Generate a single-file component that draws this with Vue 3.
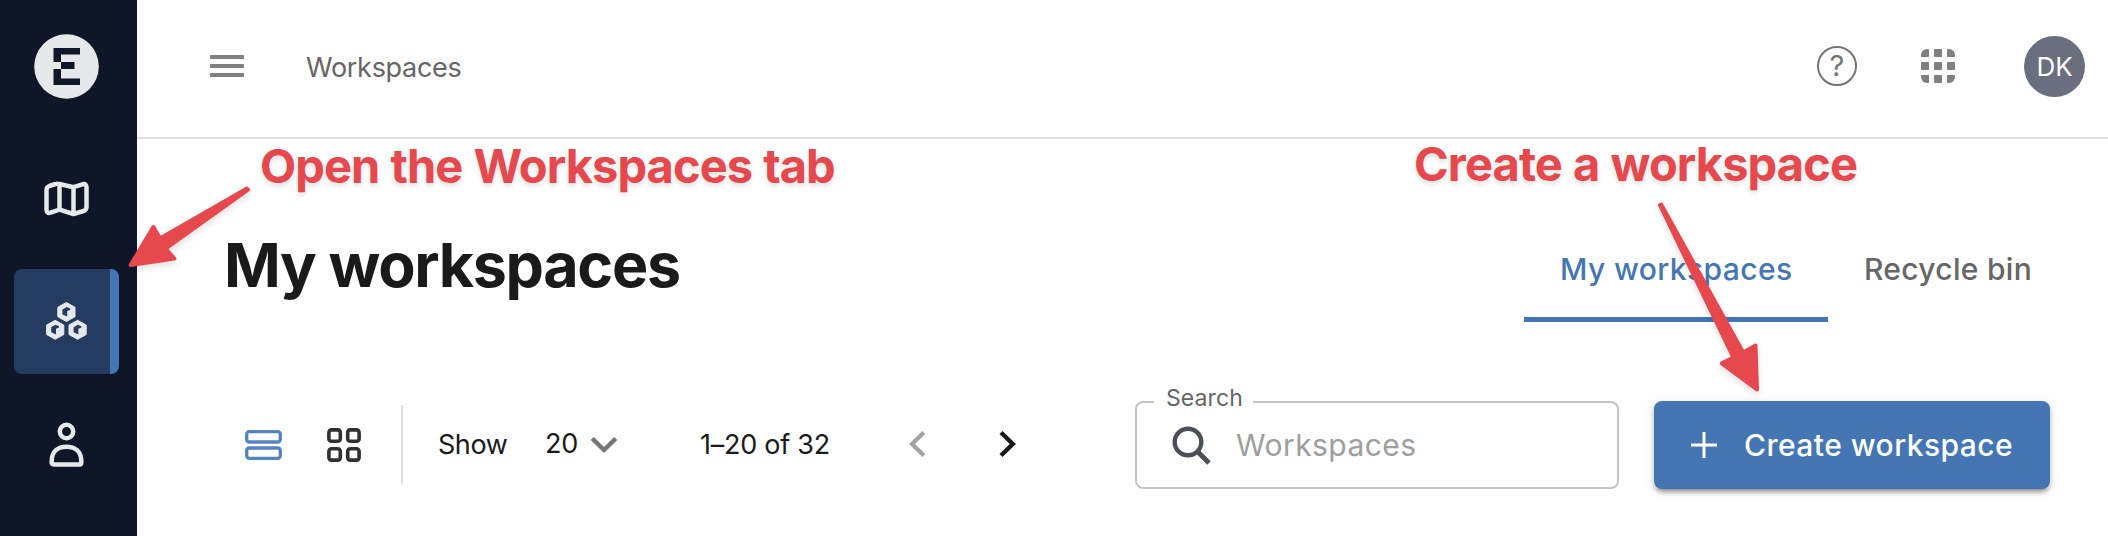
<script setup>
const dots = [0, 13, 26]
</script>

<template>
  <div class="app">
    <aside class="sidebar">
      <svg class="logo" width="65" height="65" viewBox="0 0 65 65">
        <circle cx="32.5" cy="32.5" r="32.3" fill="#e6e8ea" />
        <path d="M19.500 14H46v6.500H27V28h13.500v7H27v9.500h19V51H19.500V35H27v-7H19.500z" fill="#0f1628" />
      </svg>
      <a class="item map">
        <svg width="47" height="38" viewBox="0.5 0 47 38" fill="none" stroke="#e6e8ea" stroke-width="4.500" stroke-linejoin="round">
          <path d="M17 4 Q15 3.300 13 4 L6.800 6 Q4 7 4 10 V29.500 Q4 34 8 32.700 L17 29.700 L31 34 L41 31 Q44 30 44 27 V7.500 Q44 3.300 40 4.300 L31 7.200 Z M17 4 V30 M31 7.500 V34" />
        </svg>
      </a>
      <a class="item active">
        <svg width="42" height="38" viewBox="0 0 42 38">
          <defs>
            <g id="cube">
              <path d="M9.200 0.500 L17.800 5.300 V14.700 L9.200 19.500 L0.600 14.700 V5.300 Z" fill="#e6e9ec" stroke="#e6e9ec" stroke-width="1" stroke-linejoin="round" />
              <path d="M5.200 7.400 L9.500 5 L13 6.500 V7.800 L10 9 V14.600 L5.200 12.500 Z" fill="#253c60" />
            </g>
          </defs>
          <use href="#cube" x="11.200" y="0" />
          <use href="#cube" x="0" y="17.800" />
          <use href="#cube" x="22.400" y="17.800" />
        </svg>
      </a>
      <a class="item person">
        <svg width="37" height="46" viewBox="-0.500 0 37 46" fill="none" stroke="#e6e8ea" stroke-width="4.500">
          <circle cx="18" cy="9.500" r="6.700" />
          <path d="M3.200 39 C3.200 30 9 24.700 18 24.700 S32.800 30 32.800 39 V40.500 Q32.800 42.500 30.800 42.500 H5.200 Q3.200 42.500 3.200 40.500 Z" />
        </svg>
      </a>
    </aside>

    <div class="main">
      <header class="topbar">
        <svg class="burger" width="34" height="22" viewBox="0 0 34 22" fill="#808080">
          <rect width="34" height="4" rx="0.800" />
          <rect y="9" width="34" height="4" rx="0.800" />
          <rect y="18" width="34" height="4" rx="0.800" />
        </svg>
        <span class="crumb">Workspaces</span>
        <span class="help">?</span>
        <svg class="apps" width="34" height="34" viewBox="0 0 34 34" fill="#808080">
          <clipPath id="round"><rect width="34" height="34" rx="6" /></clipPath>
          <g clip-path="url(#round)">
            <template v-for="y in dots" :key="y">
              <rect v-for="x in dots" :key="x" :x="x" :y="y" width="8" height="8" rx="0.700" />
            </template>
          </g>
        </svg>
        <span class="avatar">DK</span>
      </header>

      <section class="heading">
        <h1>My workspaces</h1>
        <nav class="tabs">
          <a class="tab current"><span>My workspaces</span></a>
          <a class="tab"><span>Recycle bin</span></a>
        </nav>
      </section>

      <section class="toolbar">
        <svg class="rows" width="37" height="30" viewBox="0 0 37 30" fill="none" stroke="#5584c0" stroke-width="3.300">
          <rect x="1.700" y="1.700" width="33.600" height="10.300" rx="2.500" />
          <rect x="1.700" y="18" width="33.600" height="10.300" rx="2.500" />
        </svg>
        <svg class="cells" width="34" height="34" viewBox="0 0 34 34" fill="none" stroke="#303030" stroke-width="3.600">
          <rect x="1.900" y="1.900" width="11.400" height="11.400" rx="2.500" />
          <rect x="20.700" y="1.900" width="11.400" height="11.400" rx="2.500" />
          <rect x="1.900" y="20.700" width="11.400" height="11.400" rx="2.500" />
          <rect x="20.700" y="20.700" width="11.400" height="11.400" rx="2.500" />
        </svg>
        <i class="divider"></i>
        <span class="show">Show</span>
        <span class="count">20</span>
        <svg class="down" width="28" height="18" viewBox="0 0 28 18" fill="none" stroke="#757575" stroke-width="4.400">
          <path d="M2.300 2.500 L14 14 L25.700 2.500" />
        </svg>
        <span class="range">1–20 of 32</span>
        <svg class="prev" width="17" height="28" viewBox="0 0 17 28" fill="none" stroke="#a3a3a3" stroke-width="4.200">
          <path d="M14.800 2.500 L3 14 L14.800 25.500" />
        </svg>
        <svg class="next" width="17" height="28" viewBox="0 0 17 28" fill="none" stroke="#1a1a1a" stroke-width="4.400">
          <path d="M2 2.500 L13.800 14 L2 25.500" />
        </svg>
        <fieldset class="search">
          <legend><span>Search</span></legend>
          <div class="field">
            <svg width="40" height="40" viewBox="0 0 40 40" fill="none" stroke="#4d5059" stroke-width="4.400">
              <circle cx="16" cy="16" r="13.300" />
              <path d="M25.500 25.500 L37 37" stroke-width="5" />
            </svg>
            <span class="placeholder">Workspaces</span>
          </div>
        </fieldset>
        <button class="create">
          <svg width="26" height="26" viewBox="0 0 26 26" stroke="#fff" stroke-width="3"><path d="M13 0 V26 M0 13 H26" /></svg>
          <span>Create workspace</span>
        </button>
      </section>
    </div>

    <div class="notes">
      <span class="note open">Open the Workspaces tab</span>
      <span class="note make">Create a workspace</span>
      <svg class="arrows" width="2108" height="536" viewBox="0 0 2108 536" fill="#e5484d" stroke="#e5484d" stroke-width="4" stroke-linejoin="round">
        <path d="M247 188.600 L248 189.600 L165.500 248.500 L174.300 258.600 L130.600 265 L153.400 227 L160 238.600 Z" />
        <path d="M1659.900 205 L1661.300 204.600 L1743.300 352.600 L1755.500 345.500 L1757 389.500 L1721.800 363.400 L1733.500 357.600 Z" />
      </svg>
    </div>
  </div>
</template>

<style>
body { margin: 0; background: #fff; }
</style>

<style scoped>
.app { position: relative; display: flex; width: 2108px; height: 536px; overflow: hidden; background: #fff; font-family: Inter, "Liberation Sans", sans-serif; color: #1a1a1a; }
.app svg { display: block; flex: none; }
.app span, h1 { white-space: nowrap; flex: none; }
.sidebar { flex: none; box-sizing: border-box; width: 137px; height: 536px; padding: 34px 18px 0 14px; background: #0f1628; display: flex; flex-direction: column; }
.logo { margin-left: 20px; }
.item { flex: none; box-sizing: border-box; width: 105px; height: 105px; display: flex; align-items: center; justify-content: center; }
.map { margin-top: 47px; }
.active { margin-top: 18px; padding-bottom: 2px; border-radius: 8px; background: linear-gradient(to right, #253c60 96px, #4476b4 96px); }
.person { margin-top: 18px; }
.main { flex: 1; min-width: 0; }
.topbar { box-sizing: border-box; height: 139px; border-bottom: 2px solid #e0e0e0; padding: 0 23px 5px 73px; display: flex; align-items: center; }
.crumb { margin-left: 62px; padding-top: 3px; font-size: 27px; letter-spacing: -0.3px; color: #666; }
.help { box-sizing: border-box; width: 40px; height: 40px; margin-left: auto; border: 2px solid #757575; border-radius: 50%; font-size: 29px; line-height: 36px; text-align: center; color: #757575; }
.apps { margin-left: 64px; }
.avatar { width: 61px; height: 61px; margin-left: 69px; border-radius: 50%; background: #6a6f7f; color: #fff; font-size: 26px; line-height: 61px; text-align: center; }
.heading { display: flex; justify-content: space-between; height: 262px; }
h1 { margin: 86px 0 0 87px; font-size: 61px; line-height: 80px; font-weight: 700; letter-spacing: -1.35px; }
.tabs { display: flex; margin-right: 41px; }
.tab { box-sizing: border-box; height: 183px; padding: 110px 36px 0; font-size: 30px; line-height: 40px; font-weight: 500; letter-spacing: 0.4px; color: #666; }
.current { width: 304px; color: #4476b4; border-bottom: 5px solid #4476b4; }
.tab:last-child { width: 239px; letter-spacing: 0.3px; }
.toolbar { display: flex; height: 88px; align-items: center; padding-left: 109px; }
.rows { margin-left: -1px; }
.cells { margin-left: 45px; }
.divider { width: 2px; height: 79px; margin: 0 0 1px 40px; background: #dedede; }
.show, .count, .range { font-size: 27px; padding-bottom: 1px; letter-spacing: -0.25px; }
.show { width: 68px; margin-left: 35px; letter-spacing: -0.45px; }
.count { width: 33px; margin-left: 39px; padding-bottom: 3px; }
.down { margin-left: 12px; }
.range { width: 129px; margin-left: 82px; }
.prev { margin: 0 0 2px 80px; }
.next { margin: 0 0 2px 73px; }
.search { flex: none; box-sizing: border-box; width: 484px; height: 99px; margin: -11px 0 0 119px; padding: 0 0 0 17px; border: 2px solid #c4c4c4; border-radius: 8px; min-width: 0; }
.search legend { width: 99px; box-sizing: border-box; padding: 0 0 0 12px; height: 24px; line-height: 24px; color: #666; }
.search legend span { display: block; margin-top: -4px; font-size: 23px; letter-spacing: 0.1px; }
.field { display: flex; align-items: center; height: 64px; padding-left: 18px; }
.placeholder { margin-left: 24px; padding-bottom: 2px; font-size: 30px; letter-spacing: 0.45px; color: #9e9e9e; }
.create { flex: none; box-sizing: border-box; width: 396px; height: 88px; margin-left: 35px; padding: 0 0 0 37px; border: 0; border-radius: 8px; background: #4476b4; color: #fff; display: flex; align-items: center; font: 500 30px Inter, "Liberation Sans", sans-serif; letter-spacing: 0.46px; box-shadow: 0 6px 5px -4px rgba(0,0,0,.25), 0 3px 5px rgba(0,0,0,.22), 0 2px 12px rgba(0,0,0,.1); }
.create span { margin-left: 27px; }
.notes { position: absolute; inset: 0; pointer-events: none; }
.note { position: absolute; font-size: 47px; line-height: 60px; font-weight: 700; letter-spacing: -0.93px; word-spacing: 0.9px; color: #e5484d; text-shadow: 0 3px 5px rgba(0,0,0,.13); }
.open { left: 260px; top: 136px; }
.make { left: 1414px; top: 134px; letter-spacing: -0.9px; }
.arrows { position: absolute; inset: 0; filter: drop-shadow(0 3px 3px rgba(0,0,0,.13)); }
</style>
